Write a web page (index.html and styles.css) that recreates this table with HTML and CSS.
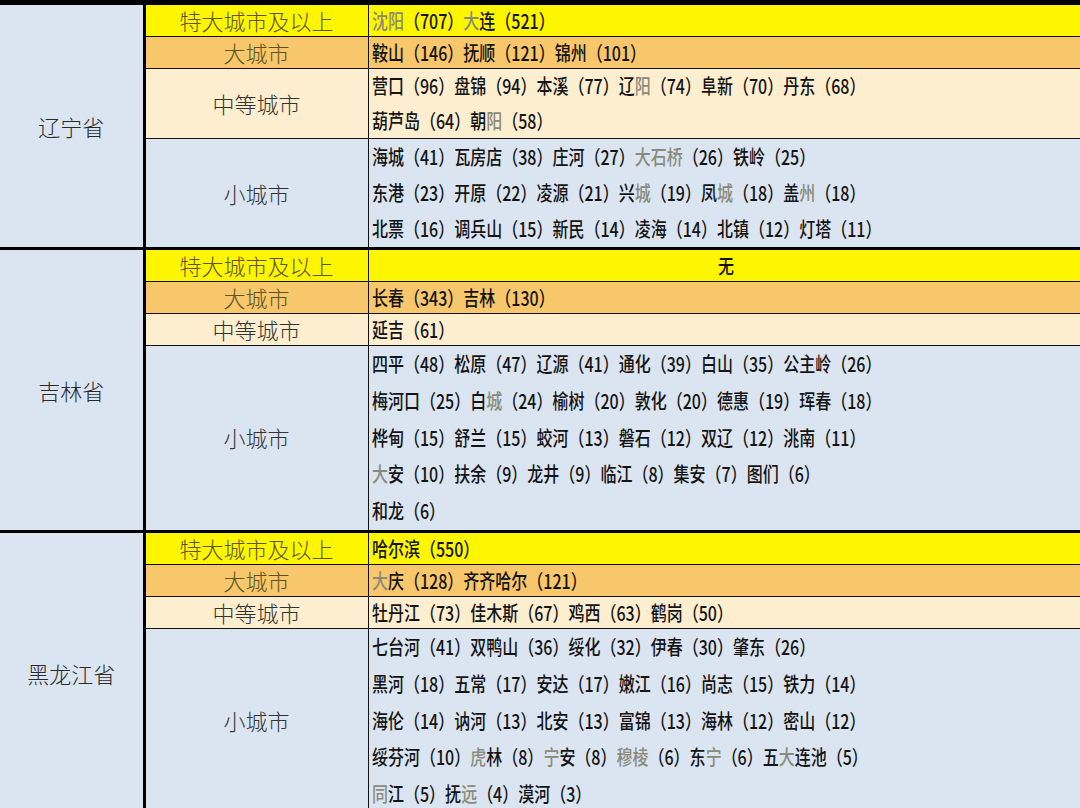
FILE: index.html
```html
<!DOCTYPE html>
<html lang="zh-CN">
<head>
<meta charset="utf-8">
<title>东北城市规模</title>
<link rel="stylesheet" href="styles.css">
</head>
<body>
<table class="sheet">
  <colgroup><col class="c-prov"><col class="c-cat"><col class="c-data"></colgroup>
  <tbody>
    <tr class="mega">
      <td class="prov last" rowspan="4"><span class="pname">辽宁省</span></td>
      <td class="cat">特大城市及以上</td>
      <td class="data"><div class="ln"><span class="t"><span class="dim">沈阳</span>（707）<span class="dim">大</span>连（521）</span></div></td>
    </tr>
    <tr class="big">
      <td class="cat">大城市</td>
      <td class="data"><div class="ln"><span class="t">鞍山（146）抚顺（121）锦州（101）</span></div></td>
    </tr>
    <tr class="mid">
      <td class="cat">中等城市</td>
      <td class="data l35">
        <div class="ln"><span class="t">营口（96）盘锦（94）本溪（77）辽<span class="dim">阳</span>（74）阜新（70）丹东（68）</span></div>
        <div class="ln"><span class="t">葫芦岛（64）朝<span class="dim">阳</span>（58）</span></div>
      </td>
    </tr>
    <tr class="small">
      <td class="cat last">小城市</td>
      <td class="data l36 last">
        <div class="ln"><span class="t">海城（41）瓦房店（38）庄河（27）<span class="dim">大石桥</span>（26）铁岭（25）</span></div>
        <div class="ln"><span class="t">东港（23）开原（22）凌源（21）兴<span class="dim">城</span>（19）凤<span class="dim">城</span>（18）盖<span class="dim">州</span>（18）</span></div>
        <div class="ln"><span class="t">北票（16）调兵山（15）新民（14）凌海（14）北镇（12）灯塔（11）</span></div>
      </td>
    </tr>
  </tbody>
  <tbody>
    <tr class="mega">
      <td class="prov last" rowspan="4"><span class="pname">吉林省</span></td>
      <td class="cat">特大城市及以上</td>
      <td class="data center"><div class="ln"><span class="t">无</span></div></td>
    </tr>
    <tr class="big">
      <td class="cat">大城市</td>
      <td class="data"><div class="ln"><span class="t">长春（343）吉林（130）</span></div></td>
    </tr>
    <tr class="mid">
      <td class="cat">中等城市</td>
      <td class="data"><div class="ln"><span class="t">延吉（61）</span></div></td>
    </tr>
    <tr class="small">
      <td class="cat last">小城市</td>
      <td class="data l37 last">
        <div class="ln"><span class="t">四平（48）松原（47）辽源（41）通化（39）白山（35）公主岭（26）</span></div>
        <div class="ln"><span class="t">梅河口（25）白<span class="dim">城</span>（24）榆树（20）敦化（20）德惠（19）珲春（18）</span></div>
        <div class="ln"><span class="t">桦甸（15）舒兰（15）蛟河（13）磐石（12）双辽（12）洮南（11）</span></div>
        <div class="ln"><span class="t"><span class="dim">大</span>安（10）扶余（9）龙井（9）临江（8）集安（7）图们（6）</span></div>
        <div class="ln"><span class="t">和龙（6）</span></div>
      </td>
    </tr>
  </tbody>
  <tbody>
    <tr class="mega">
      <td class="prov" rowspan="4"><span class="pname">黑龙江省</span></td>
      <td class="cat">特大城市及以上</td>
      <td class="data"><div class="ln"><span class="t">哈尔滨（550）</span></div></td>
    </tr>
    <tr class="big">
      <td class="cat">大城市</td>
      <td class="data"><div class="ln"><span class="t"><span class="dim">大</span>庆（128）齐齐哈尔（121）</span></div></td>
    </tr>
    <tr class="mid">
      <td class="cat">中等城市</td>
      <td class="data"><div class="ln"><span class="t">牡丹江（73）佳木斯（67）鸡西（63）鹤岗（50）</span></div></td>
    </tr>
    <tr class="small">
      <td class="cat">小城市</td>
      <td class="data l37">
        <div class="ln"><span class="t">七台河（41）双鸭山（36）绥化（32）伊春（30）肇东（26）</span></div>
        <div class="ln"><span class="t">黑河（18）五常（17）安达（17）嫩江（16）尚志（15）铁力（14）</span></div>
        <div class="ln"><span class="t">海伦（14）讷河（13）北安（13）富锦（13）海林（12）密山（12）</span></div>
        <div class="ln"><span class="t">绥芬河（10）<span class="dim">虎</span>林（8）<span class="dim">宁</span>安（8）<span class="dim">穆棱</span>（6）东<span class="dim">宁</span>（6）五<span class="dim">大</span>连池（5）</span></div>
        <div class="ln"><span class="t"><span class="dim">同</span>江（5）抚<span class="dim">远</span>（4）漠河（3）</span></div>
      </td>
    </tr>
  </tbody>
</table>
</body>
</html>
```

FILE: styles.css
```css
html, body {
  margin: 0;
  padding: 0;
  background: #dbe5f1;
}
body {
  width: 1080px;
  height: 808px;
  overflow: hidden;
  font-family: "Noto Sans CJK SC", "Noto Sans", sans-serif;
}
.sheet {
  width: 1080px;
  table-layout: fixed;
  border-collapse: collapse;
  border-top: 5px solid #000;
}
.c-prov { width: 144px; }
.c-cat { width: 224px; }
.sheet td {
  padding: 0;
  border: 1px solid #111;
  vertical-align: middle;
}
.sheet td.last {
  border-bottom: 3px solid #000;
}
.prov {
  background: #dbe5f1;
  border-left: 0 !important;
  border-right: 3px solid #000 !important;
  text-align: center;
}
.pname {
  font-size: 22px;
  font-weight: 300;
  color: #2a2a2a;
}
.cat {
  text-align: center;
  font-size: 22px;
  font-weight: 300;
  line-height: 31px;
  color: #333;
}
.mega .cat, .big .cat {
  color: #5e5420;
}
.data {
  border-right: 0 !important;
  padding-left: 3px !important;
  color: #141414;
}
.mega td.cat, .mega td.data { background: #fdf600; }
.big td.cat, .big td.data { background: #f8c66b; }
.mid td.cat, .mid td.data { background: #fdeed0; }
.small td.cat, .small td.data { background: #dbe5f1; }

.ln {
  height: 31px;
  line-height: 31px;
  white-space: nowrap;
}
.l35 .ln { height: 34.5px; line-height: 34.5px; }
.l36 .ln { height: 36px; line-height: 36px; }
.l37 .ln { height: 36.8px; line-height: 36.8px; }

.t {
  display: inline-block;
  font-size: 20px;
  font-weight: 500;
  transform: scaleX(0.8);
  transform-origin: left center;
}
.center { text-align: center; }
.center .t { transform-origin: center center; }
.dim { color: #8a8a7a; }
```
